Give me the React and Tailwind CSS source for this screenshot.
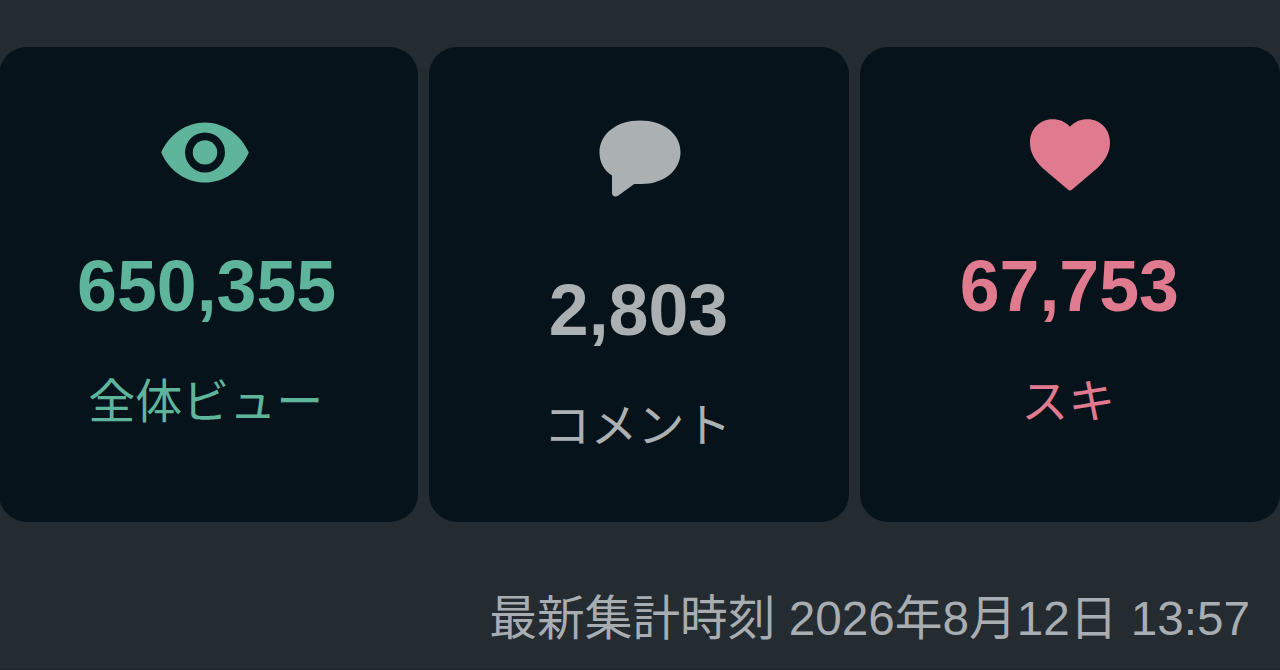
const EyeIcon = () => (
  <svg viewBox="0 0 96 96" className="w-24 h-24" fill="currentColor">
    <path
      fillRule="evenodd"
      d="M1.2 48.5C9 30.8 26 18.5 45 18.5S81 30.8 88.8 48.5C81 66.4 64 78.6 45 78.6S9 66.4 1.2 48.5ZM45 28.4a20 20 0 1 0 0 40 20 20 0 0 0 0-40Z"
    />
    <circle cx="45" cy="48.4" r="12.2" />
  </svg>
)

const CommentIcon = () => (
  <svg viewBox="0 0 96 96" className="w-24 h-24" fill="currentColor">
    <path d="M49 16.500C72 16.500 89.500 29.500 89.500 48S73 80 50.500 80Q46.500 80 43.200 80L27.500 91.500C24.700 93.600 21 92.600 21 89V71.500C13 66.500 8.500 58 8.500 48.500 8.500 29.500 26 16.500 49 16.500Z" />
  </svg>
)

const HeartIcon = () => (
  <svg viewBox="0 0 96 96" className="w-24 h-24" fill="currentColor">
    <path d="M48 22.8C52.500 17.700 58.500 15.300 65.500 15.300 78.500 15.300 88 25.500 88 38.500 88 48.500 83.500 56 75.500 64L50.200 85.500Q48 87.300 45.800 85.500L20.500 64C12.500 56 8 48.500 8 38.500 8 25.500 17.500 15.300 30.500 15.300 37.500 15.300 43.500 17.700 48 22.800Z" />
  </svg>
)

const stats = [
  { label: '全体ビュー', value: '650,355', Icon: EyeIcon, color: 'text-[#5fb49c]', gap: 'mt-[50px]', shift: 'pr-[3px]' },
  { label: 'コメント', value: '2,803', Icon: CommentIcon, color: 'text-[#abb0b2]', gap: 'mt-[74px]', shift: 'pr-[1px]' },
  { label: 'スキ', value: '67,753', Icon: HeartIcon, color: 'text-[#e07a8f]', gap: 'mt-[50px]', shift: 'pr-[1px]' },
]

function StatCard({ stat }) {
  const { label, value, Icon, color, gap, shift } = stat
  return (
    <div className={`flex flex-col items-center h-[475px] pt-[57px] rounded-[28px] bg-[#07131a] ${color}`}>
      <Icon />
      <div className={`${gap} ${shift} text-[71.7px] leading-[72px] font-bold`}>{value}</div>
      <div className={`mt-[45px] mr-0.5 ${shift} text-[47px] leading-[70px]`}>{label}</div>
    </div>
  )
}

export default function App() {
  return (
    <div className="w-[1280px] h-[670px] overflow-hidden bg-[#242b31] border-b border-[#1b2126] pt-[47px] font-['Liberation_Sans','Noto_Sans_CJK_JP',sans-serif]">
      <div className="grid grid-cols-3 gap-[11.5px] -ml-[1.5px] mr-[0.5px]">
        {stats.map((stat) => (
          <StatCard key={stat.label} stat={stat} />
        ))}
      </div>

      {/* Last updated */}
      <p className="mt-[62px] pr-[30px] text-right whitespace-nowrap text-[47.7px] leading-[70px] text-[#a8adb1]">
        最新集計時刻 2026年8月12日 13:57
      </p>
    </div>
  )
}
